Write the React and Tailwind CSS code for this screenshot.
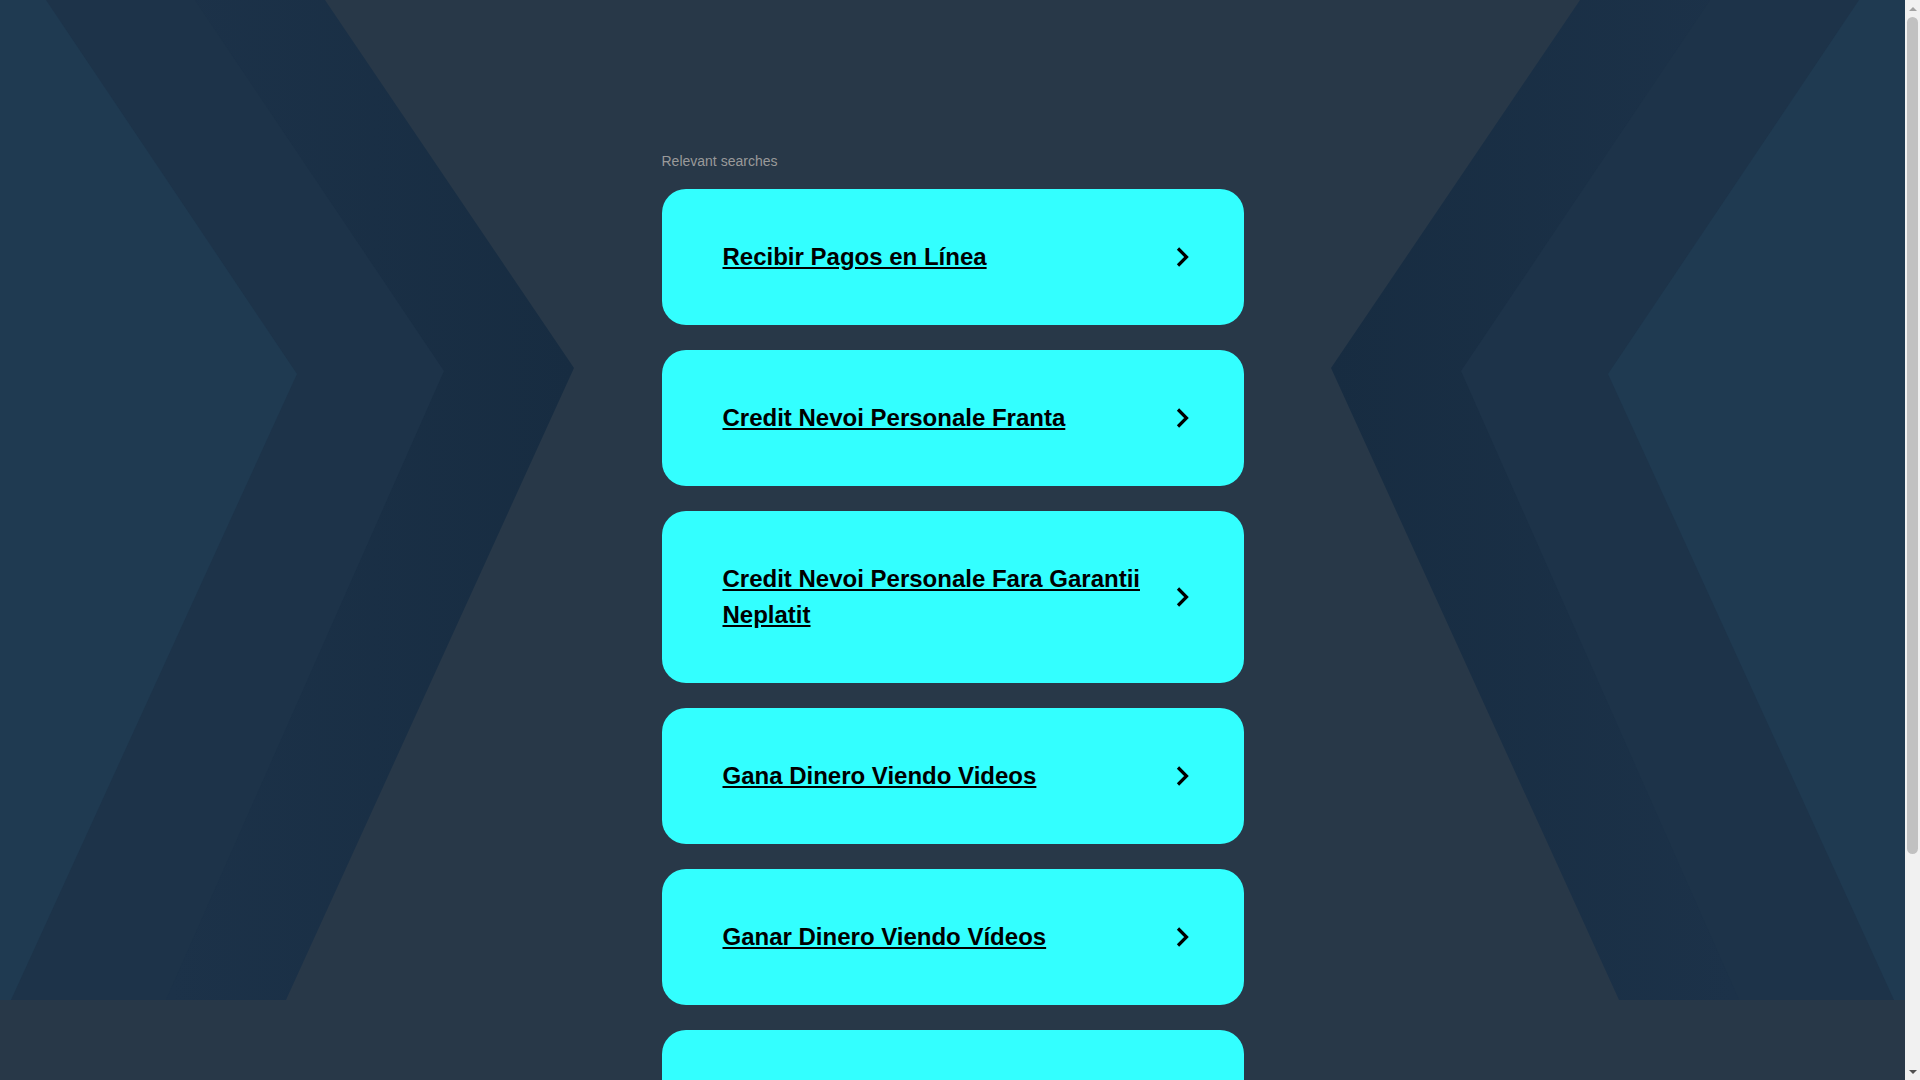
import React from "react";

const searches = [
    "Recibir Pagos en Línea",
    "Credit Nevoi Personale Franta",
    "Credit Nevoi Personale Fara Garantii Neplatit",
    "Gana Dinero Viendo Videos",
    "Ganar Dinero Viendo Vídeos",
    "Prestamos Personales en Linea",
];

function Backdrop() {
    // mirrored chevron shapes behind the list
    const left = [
        { pts: "0,0 325,0 574,368 286,1000 0,1000", fill: "url(#outerL)" },
        { pts: "0,0 195,0 444,371 166,1000 0,1000", fill: "#1d3349" },
        { pts: "0,0 46,0 297,374 11,1000 0,1000", fill: "#1f3a51" },
    ];
    const mirror = (pts) =>
        pts
            .split(" ")
            .map((p) => {
                const [x, y] = p.split(",").map(Number);
                return `${1905 - x},${y}`;
            })
            .join(" ");

    return (
        <svg
            className="absolute top-0 left-0 w-full h-[1000px]"
            viewBox="0 0 1905 1000"
            preserveAspectRatio="none"
        >
            <defs>
                <linearGradient id="outerL" x1="0" y1="0" x2="1" y2="0">
                    <stop offset="0.3" stopColor="#1c3249" />
                    <stop offset="1" stopColor="#172c41" />
                </linearGradient>
                <linearGradient id="outerR" x1="1" y1="0" x2="0" y2="0">
                    <stop offset="0.3" stopColor="#1c3249" />
                    <stop offset="1" stopColor="#172c41" />
                </linearGradient>
            </defs>
            {left.map((s, i) => (
                <polygon key={"l" + i} points={s.pts} fill={s.fill} />
            ))}
            {left.map((s, i) => (
                <polygon
                    key={"r" + i}
                    points={mirror(s.pts)}
                    fill={i === 0 ? "url(#outerR)" : s.fill}
                />
            ))}
        </svg>
    );
}

function Chevron() {
    return (
        <svg width="16" height="24" viewBox="0 0 16 24" className="shrink-0">
            <path
                d="M3 3.5 L11.5 12 L3 20.5"
                fill="none"
                stroke="#000"
                strokeWidth="3.2"
            />
        </svg>
    );
}

function Scrollbar() {
    return (
        <div className="w-[15px] shrink-0 bg-[#f1f1f1]">
            <div className="sticky top-0 h-screen flex flex-col items-center">
                <div className="h-[17px] flex items-center justify-center">
                    <div className="w-0 h-0 border-l-[4px] border-r-[4px] border-b-[4px] border-l-transparent border-r-transparent border-b-[#a3a3a3]" />
                </div>
                <div className="flex-1 w-full px-[2px]">
                    <div className="h-[80%] w-full rounded-[6px] bg-[#c1c1c1]" />
                </div>
                <div className="h-[17px] flex items-center justify-center">
                    <div className="w-0 h-0 border-l-[4px] border-r-[4px] border-t-[4px] border-l-transparent border-r-transparent border-t-[#505050]" />
                </div>
            </div>
        </div>
    );
}

export default function App() {
    return (
        <div
            className="flex min-h-screen"
            style={{ fontFamily: '"Liberation Sans", Arial, sans-serif' }}
        >
            <div className="relative flex-1 bg-[#283848]">
                <Backdrop />
                <div className="relative w-[582px] mx-auto pt-[151px] pb-[40px]">
                    <div className="text-[14px] leading-[20px] text-[#9a9a9a] mb-[18px]">
                        Relevant searches
                    </div>
                    <div className="flex flex-col gap-[25px]">
                        {searches.map((s, i) => (
                            <a
                                key={i}
                                href="#"
                                className="flex items-center bg-[#33ffff] rounded-[24px] pl-[61px] pr-[53px] py-[50px]"
                            >
                                <span className="flex-1 pr-[20px] text-[24px] leading-[36px] font-bold text-black underline">
                                    {s}
                                </span>
                                <Chevron />
                            </a>
                        ))}
                    </div>
                </div>
            </div>
            <Scrollbar />
        </div>
    );
}
